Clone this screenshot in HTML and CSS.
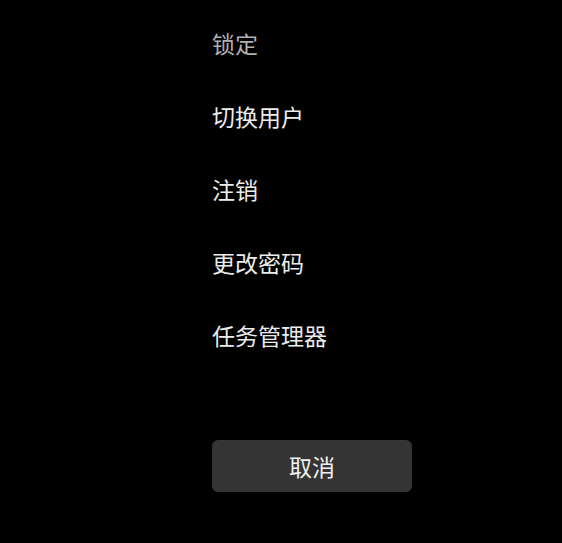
FILE: index.html
```html
<!DOCTYPE html>
<html lang="zh-CN">
<head>
<meta charset="utf-8">
<title>安全选项</title>
<link rel="stylesheet" href="styles.css">
</head>
<body>
<main class="screen">
  <ul class="options">
    <li class="option option-dim">锁定</li>
    <li class="option">切换用户</li>
    <li class="option">注销</li>
    <li class="option">更改密码</li>
    <li class="option">任务管理器</li>
  </ul>
  <button class="cancel" type="button">取消</button>
</main>
</body>
</html>
```
FILE: styles.css
```css
html, body {
  margin: 0;
  padding: 0;
  background: #000;
  height: 100%;
}
.screen {
  display: flex;
  flex-direction: column;
  align-items: flex-start;
  padding: 7px 0 0 212px;
  font-family: "Noto Sans CJK SC", "Microsoft YaHei", sans-serif;
}
.options {
  list-style: none;
  margin: 0;
  padding: 0;
  display: flex;
  flex-direction: column;
}
.option {
  height: 73px;
  line-height: 73px;
  font-size: 23px;
  color: #ececec;
}
.option-dim {
  color: #b0b0b0;
}
.cancel {
  margin-top: 68px;
  width: 200px;
  height: 52px;
  border: none;
  border-radius: 6px;
  background: #343434;
  color: #f0f0f0;
  font-family: inherit;
  font-size: 23px;
  line-height: 52px;
  padding: 0;
}
```
